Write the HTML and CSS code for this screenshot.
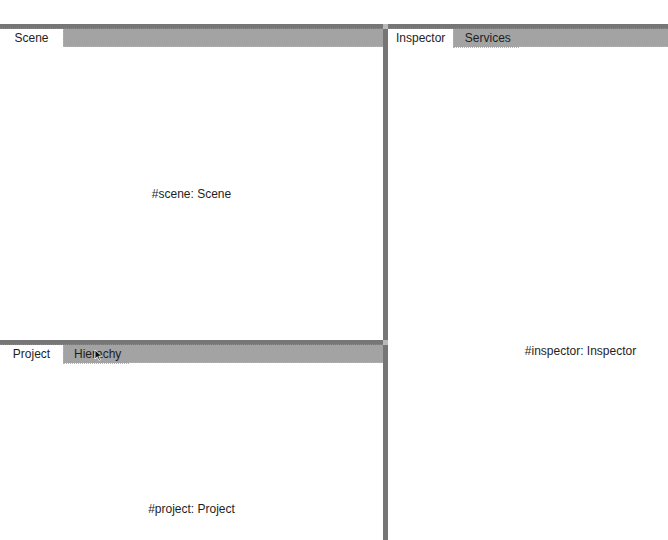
FILE: index.html
```html
<!DOCTYPE html>
<html>
<head>
<meta charset="utf-8">
<link rel="stylesheet" href="styles.css">
</head>
<body>
<div class="viewport">
<div class="dock">
  <div class="topbar">
    <div class="bar-seg left-w"></div>
    <div class="handle"></div>
    <div class="bar-seg grow"></div>
  </div>
  <div class="main">
    <div class="column">
      <section class="pane scene">
        <div class="tabbar">
          <div class="tab active">Scene</div>
          <div class="fill"></div>
        </div>
        <div class="content">#scene: Scene</div>
      </section>
      <div class="hsplit"></div>
      <section class="pane project">
        <div class="tabbar">
          <div class="tab active">Project</div>
          <div class="tab">Hierachy<svg class="cursor" width="9" height="13" viewBox="0 0 9 13"><path d="M1 1 L1 10 L3.3 7.8 L5 11.5 L6.4 10.9 L4.8 7.3 L8 7.3 Z" fill="#111" stroke="#fff" stroke-width="0.8"/></svg></div>
          <div class="fill"></div>
        </div>
        <div class="content">#project: Project</div>
      </section>
    </div>
    <div class="vsplit">
      <div class="vs-dark top"></div>
      <div class="vs-handle"></div>
      <div class="vs-dark grow"></div>
    </div>
    <section class="pane inspector">
      <div class="tabbar">
        <div class="tab active">Inspector</div>
        <div class="tab">Services</div>
        <div class="fill"></div>
      </div>
      <div class="content">#inspector: Inspector</div>
    </section>
  </div>
</div>
</div>
</body>
</html>
```
FILE: styles.css
```css
html, body {
  margin: 0;
  padding: 0;
  overflow: hidden;
  background: #fff;
}
body {
  font-family: "Liberation Sans", Arial, sans-serif;
  font-size: 12px;
  color: #1e1e1e;
}
.viewport {
  width: 100vw;
  height: 100vh;
  overflow: hidden;
}
.dock {
  margin-top: 24px;
  width: 773px;
  height: 631px;
  display: flex;
  flex-direction: column;
}
.topbar {
  display: flex;
  height: 5px;
  flex: none;
}
.bar-seg {
  background: #767676;
  border-bottom: 1px dotted #8a8a8a;
  box-sizing: border-box;
}
.left-w { width: 383px; }
.grow { flex: 1; }
.handle {
  width: 5px;
  background: #b9b9b9;
}
.main {
  flex: 1;
  display: flex;
  min-height: 0;
}
.column {
  width: 383px;
  display: flex;
  flex-direction: column;
}
.pane {
  display: flex;
  flex-direction: column;
  background: #fff;
}
.scene { height: 311px; flex: none; }
.project { flex: 1; }
.inspector { flex: 1; }
.hsplit {
  height: 5px;
  flex: none;
  background: #767676;
  border-bottom: 1px dotted #8a8a8a;
  box-sizing: border-box;
}
.vsplit {
  width: 5px;
  display: flex;
  flex-direction: column;
}
.vs-dark { background: #767676; }
.vs-dark.top { height: 311px; }
.vs-handle { height: 5px; background: #b9b9b9; }
.tabbar {
  height: 18px;
  flex: none;
  display: flex;
  background: #a3a3a3;
}
.tab {
  position: relative;
  min-width: 47px;
  padding: 1px 8px 0 10px;
  text-align: center;
  height: 17px;
  line-height: 17px;
  border-bottom: 1px dotted #b4b4b4;
}
.tab.active {
  background: #fff;
  border: none;
  padding: 1px 8px 0 8px;
}
.tab.active + .tab {
  border-left: 1px dotted #b4b4b4;
}
.fill {
  flex: 1;
  height: 17px;
  border-bottom: 1px dotted #b4b4b4;
}
.tab.active + .fill {
  border-left: 1px dotted #b4b4b4;
}
.content {
  flex: 1;
  display: flex;
  align-items: center;
  justify-content: center;
}
.cursor {
  position: absolute;
  left: 30px;
  top: 4px;
}
```
